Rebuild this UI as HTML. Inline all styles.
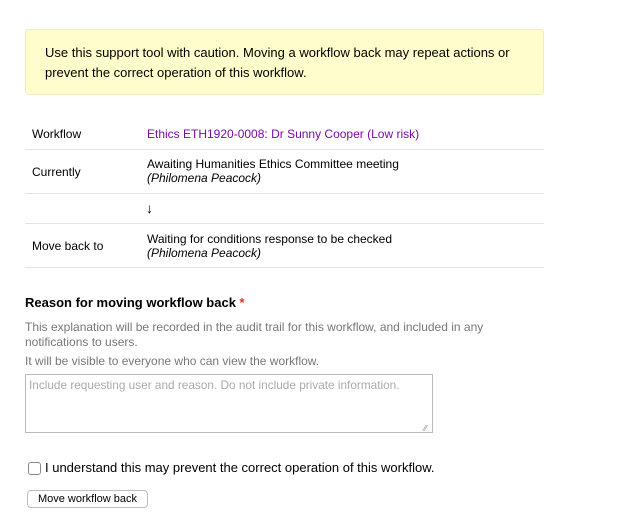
<!DOCTYPE html>
<html><head><style>
body{margin:0;width:644px;height:519px;background:#fff;font-family:"Liberation Sans",Arial,sans-serif;color:#000;position:relative;overflow:hidden}
.a{position:absolute;white-space:nowrap}
.warn{position:absolute;left:25px;top:29px;width:519px;height:66px;background:#fefdcb;border:1px solid #eeedc4;border-radius:3px;box-sizing:border-box}
.line{position:absolute;left:25px;width:519px;height:1px;background:#e4e4e4}
.t12{font-size:12px}
.gray{color:#777;font-size:12px}
</style></head><body>
<div class="warn"></div>
<div class="a" style="left:45px;top:43px;font-size:13px;line-height:20px">Use this support tool with caution. Moving a workflow back may repeat actions or<br>prevent the correct operation of this workflow.</div>

<div class="a t12" style="left:32px;top:127px">Workflow</div>
<div class="a t12" style="left:147px;top:127px;color:#7a0aa6">Ethics ETH1920-0008: Dr Sunny Cooper (Low risk)</div>
<div class="line" style="top:149px"></div>
<div class="a t12" style="left:32px;top:165px">Currently</div>
<div class="a t12" style="left:147px;top:157px;line-height:14px">Awaiting Humanities Ethics Committee meeting<br><i>(Philomena Peacock)</i></div>
<div class="line" style="top:193px"></div>
<div class="a" style="left:146px;top:200px;font-size:14px">↓</div>
<div class="line" style="top:223px"></div>
<div class="a t12" style="left:32px;top:239px">Move back to</div>
<div class="a t12" style="left:147px;top:232px;line-height:14px">Waiting for conditions response to be checked<br><i>(Philomena Peacock)</i></div>
<div class="line" style="top:267px"></div>

<div class="a" style="left:25px;top:295px;font-size:13px;font-weight:bold">Reason for moving workflow back <span style="color:#d33">*</span></div>
<div class="a gray" style="left:25px;top:320px;line-height:15px">This explanation will be recorded in the audit trail for this workflow, and included in any<br>notifications to users.</div>
<div class="a gray" style="left:25px;top:354px">It will be visible to everyone who can view the workflow.</div>
<div style="position:absolute;left:25px;top:374px;width:408px;height:59px;border:1px solid #bbb;box-sizing:border-box"></div>
<div class="a" style="left:29px;top:378px;font-size:11.8px;color:#aaa">Include requesting user and reason. Do not include private information.</div>
<div class="a" style="left:424px;top:424px;font-size:8px;color:#888">⁄⁄</div>

<div style="position:absolute;left:28px;top:462px;width:11px;height:11px;border:1px solid #888;border-radius:3px;background:#fff"></div>
<div class="a" style="left:45px;top:460px;font-size:13px">I understand this may prevent the correct operation of this workflow.</div>
<div style="position:absolute;left:27px;top:490px;width:121px;height:18px;border:1px solid #bbb;border-radius:4px;box-sizing:border-box;background:#fff;font-size:11px;text-align:center;line-height:16px">Move workflow back</div>
</body></html>
